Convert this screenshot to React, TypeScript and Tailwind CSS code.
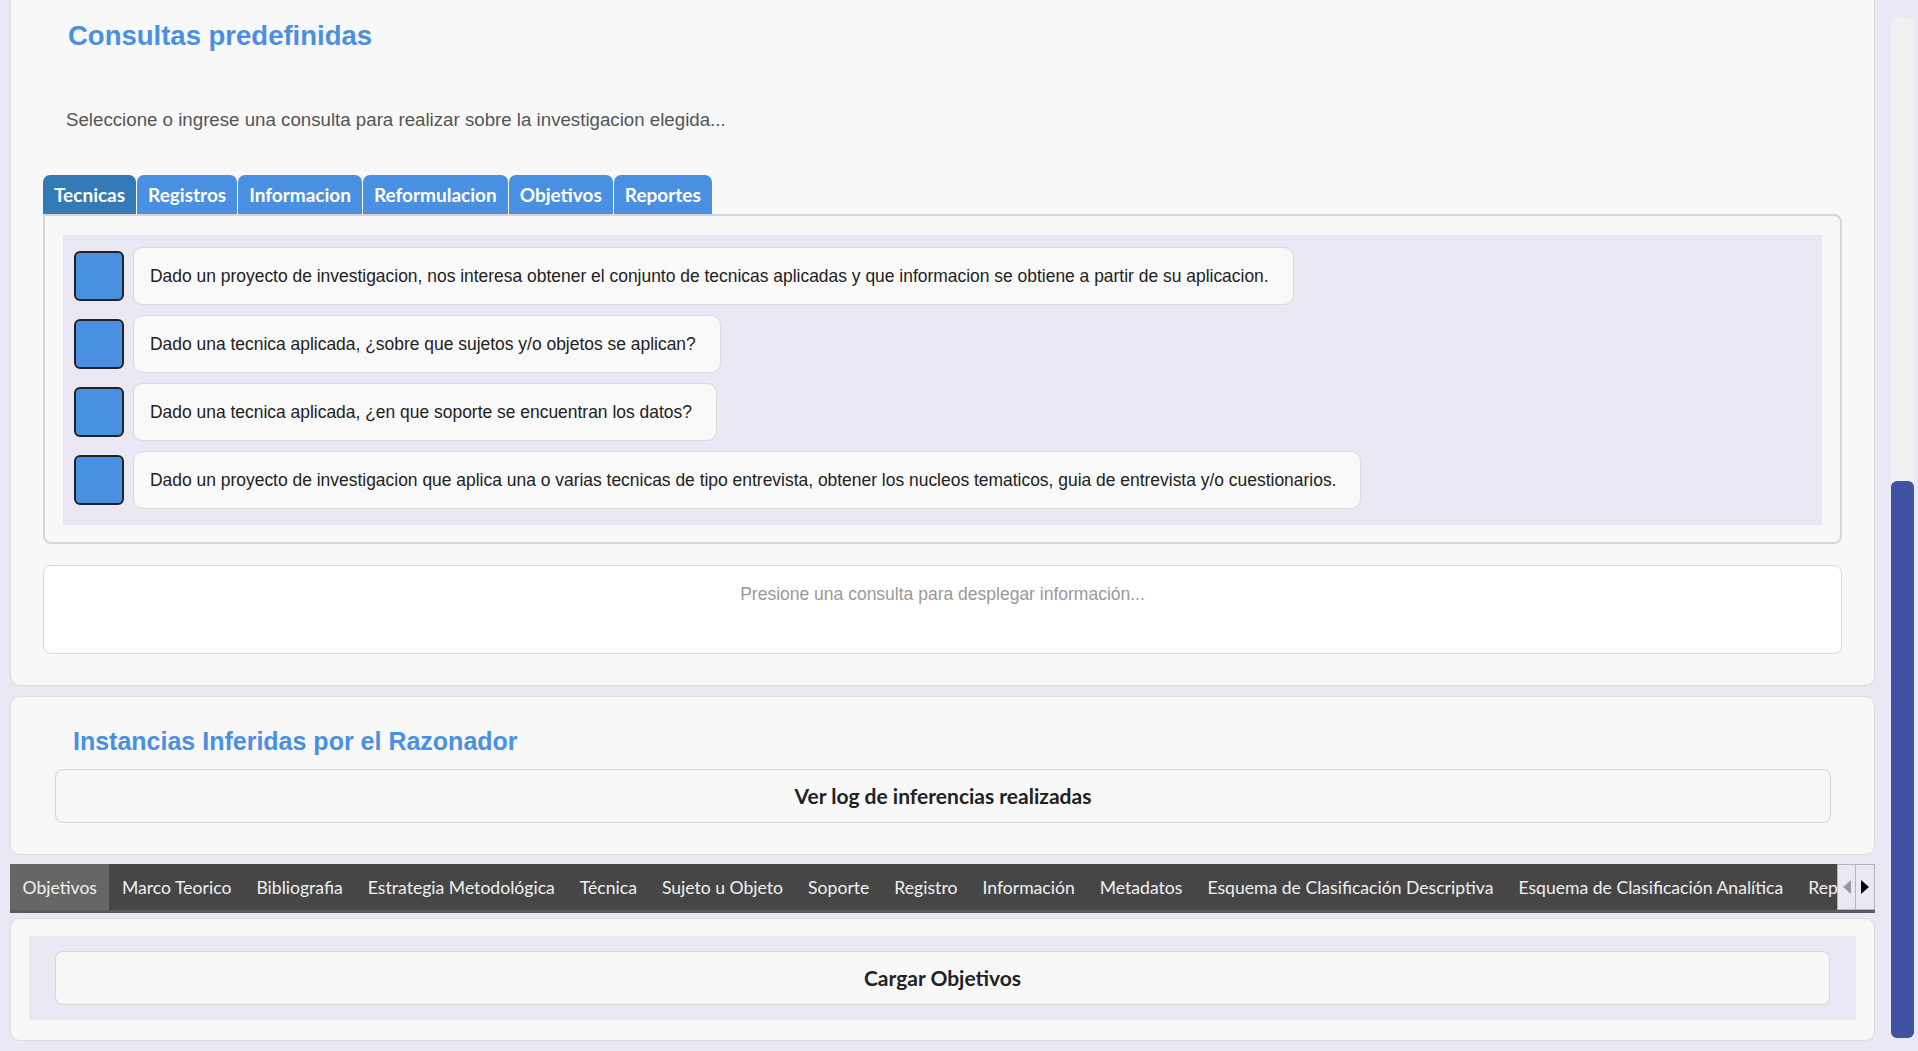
import React from "react";

const consultas = [
  "Dado un proyecto de investigacion, nos interesa obtener el conjunto de tecnicas aplicadas y que informacion se obtiene a partir de su aplicacion.",
  "Dado una tecnica aplicada, ¿sobre que sujetos y/o objetos se aplican?",
  "Dado una tecnica aplicada, ¿en que soporte se encuentran los datos?",
  "Dado un proyecto de investigacion que aplica una o varias tecnicas de tipo entrevista, obtener los nucleos tematicos, guia de entrevista y/o cuestionarios.",
];

const tabs = ["Tecnicas", "Registros", "Informacion", "Reformulacion", "Objetivos", "Reportes"];

const bottomTabs = [
  "Objetivos",
  "Marco Teorico",
  "Bibliografia",
  "Estrategia Metodológica",
  "Técnica",
  "Sujeto u Objeto",
  "Soporte",
  "Registro",
  "Información",
  "Metadatos",
  "Esquema de Clasificación Descriptiva",
  "Esquema de Clasificación Analítica",
  "Reportes",
];

export default function App() {
  return (
    <div className="flex h-[1051px] w-[1918px] overflow-hidden bg-[#ebe8f5] font-['Liberation_Sans',Arial,sans-serif]">
      <div className="flex w-[1891px] shrink-0 flex-col pl-[10px] pr-[16px]">
        {/* Panel 1 */}
        <div className="h-[686px] shrink-0 rounded-b-[10px] border border-t-0 border-[#dcdcdc] bg-[#f8f8f8] px-[32px]">
          <h2 className="ml-[25px] pt-[20px] text-[27.5px] font-bold leading-[31px] text-[#4a90e2]">
            Consultas predefinidas
          </h2>
          <p className="ml-[23px] mt-[58px] text-[18.7px] leading-[22px] text-[#555]">
            Seleccione o ingrese una consulta para realizar sobre la investigacion elegida...
          </p>
          <div className="mt-[44px] flex h-[39px] items-stretch">
            {tabs.map((t, i) => (
              <div
                key={t}
                className={
                  "mr-px flex items-center rounded-t-[7px] px-[11px] pt-px font-['Lato',sans-serif] text-[19px] font-bold text-white " +
                  (i === 0 ? "bg-[#337ab7]" : "bg-[#4a90e2]")
                }
              >
                {t}
              </div>
            ))}
          </div>
          <div className="h-[330px] rounded-[8px] rounded-tl-none border-2 border-[#d6d6d6] px-[18px] pb-[17px] pt-[19px]">
            <div className="flex h-[290px] flex-col gap-[10px] bg-[#ebe8f5] pl-[11px] pt-[12px]">
              {consultas.map((c) => (
                <div key={c} className="flex items-center gap-[9px]">
                  <button className="h-[50px] w-[50px] shrink-0 rounded-[6px] border-2 border-[#222] bg-[#4a90e2]" />
                  <div className="flex h-[58px] items-center rounded-[10px] border border-[#dadada] bg-[#f9f9f9] pl-[16px] pr-[24px] text-[17.45px] text-[#222]">
                    {c}
                  </div>
                </div>
              ))}
            </div>
          </div>
          <div className="mt-[21px] h-[89px] rounded-[8px] border border-[#dadada] bg-white pt-[18px] text-center text-[17.5px] leading-[20px] text-[#999]">
            Presione una consulta para desplegar información...
          </div>
        </div>

        {/* Panel 2 */}
        <div className="mt-[10px] h-[159px] shrink-0 rounded-[10px] border border-[#dcdcdc] bg-[#f8f8f8] pl-[44px] pr-[43px] pt-[30px]">
          <h3 className="ml-[18px] text-[25px] font-bold leading-[29px] text-[#4a90e2]">
            Instancias Inferidas por el Razonador
          </h3>
          <button className="mt-[13px] flex h-[54px] w-full items-center justify-center rounded-[8px] border border-[#d6d6d6] bg-[#f8f8f8] font-['Lato',sans-serif] text-[21px] font-bold text-[#222]">
            Ver log de inferencias realizadas
          </button>
        </div>

        {/* Bottom tab bar */}
        <div className="relative mt-[9px] flex h-[49px] shrink-0 border-b-[3px] border-[#5b5b5b] bg-[#464646]">
          <div className="flex flex-1 overflow-hidden pr-[38px]">
            {bottomTabs.map((t, i) => (
              <div
                key={t}
                className={
                  "flex shrink-0 items-center whitespace-nowrap px-[12.5px] pt-[3px] font-['Lato',sans-serif] text-[17.6px] text-[#f0f0f0] " +
                  (i === 0 ? "bg-[#666]" : "")
                }
              >
                {t}
              </div>
            ))}
          </div>
          <div className="absolute right-0 top-0 flex h-[46px]">
            <div className="flex w-[19px] items-center justify-center border border-[#b5b5b5] bg-[#ebe8f5]">
              <svg width="8" height="14" viewBox="0 0 8 14">
                <polygon points="8,0 0,7 8,14" fill="#9a9a9a" />
              </svg>
            </div>
            <div className="flex w-[19px] items-center justify-center border border-l-0 border-[#b5b5b5] bg-[#ebe8f5]">
              <svg width="8" height="14" viewBox="0 0 8 14">
                <polygon points="0,0 8,7 0,14" fill="#000" />
              </svg>
            </div>
          </div>
        </div>

        {/* Panel 3 */}
        <div className="mt-[5px] h-[123px] shrink-0 rounded-[10px] border border-[#dcdcdc] bg-[#f8f8f8] px-[18px] pt-[17px]">
          <div className="h-[84px] bg-[#ebe8f5] px-[26px] pt-[15px]">
            <button className="flex h-[54px] w-full items-center justify-center rounded-[8px] border border-[#d6d6d6] bg-[#f8f8f8] font-['Lato',sans-serif] text-[21px] font-bold text-[#222]">
              Cargar Objetivos
            </button>
          </div>
        </div>
      </div>

      {/* Scrollbar */}
      <div className="flex w-[23px] shrink-0 flex-col pt-[17px] pb-[13px]">
        <div className="flex flex-1 flex-col rounded-t-[6px] bg-[#f0f0f0]">
          <div className="h-[464px] shrink-0" />
          <div className="flex-1 rounded-[6px] bg-[#3f51a0]" />
        </div>
      </div>
    </div>
  );
}
